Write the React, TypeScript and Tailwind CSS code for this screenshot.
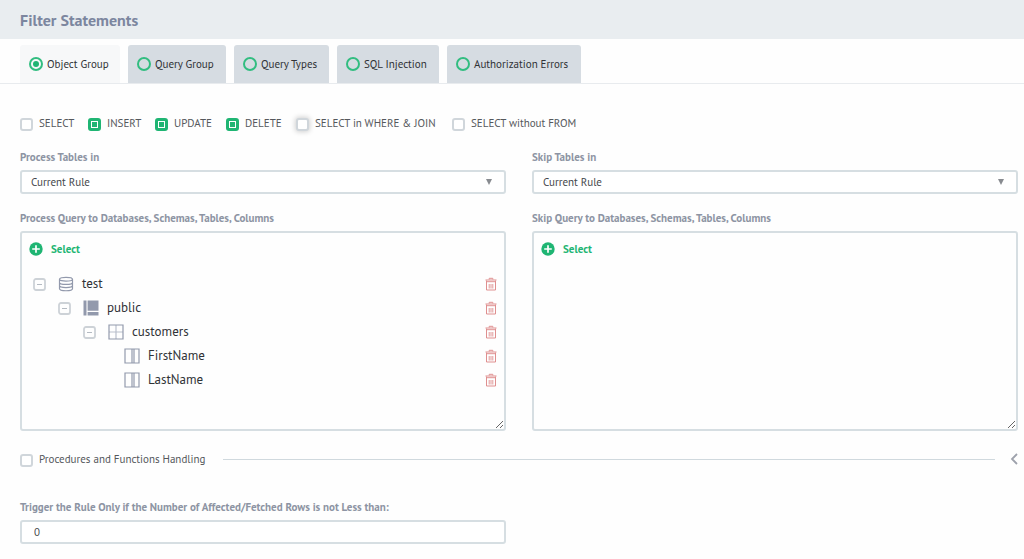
import { useState, type ReactNode } from 'react';

const tabs = [
  { name: 'Object Group', width: 'w-[100px]' },
  { name: 'Query Group', width: 'w-[98px]' },
  { name: 'Query Types', width: 'w-[95px]' },
  { name: 'SQL Injection', width: 'w-[102px]' },
  { name: 'Authorization Errors', width: 'w-[134px]' },
];

const statements = [
  { name: 'SELECT', width: 'w-[56px]', checked: false, glow: false },
  { name: 'INSERT', width: 'w-[55px]', checked: true, glow: false },
  { name: 'UPDATE', width: 'w-[59px]', checked: true, glow: false },
  { name: 'DELETE', width: 'w-[58px]', checked: true, glow: false },
  { name: 'SELECT in WHERE & JOIN', width: 'w-[144px]', checked: false, glow: true },
  { name: 'SELECT without FROM', width: 'w-[140px]', checked: false, glow: false },
];

function Checkbox({ label, checked = false, glow = false, width = '' }: { label: string; checked?: boolean; glow?: boolean; width?: string }) {
  return (
    <label className={`flex items-center gap-1.5 whitespace-nowrap text-[11px] leading-4 text-[#55585c] ${width}`}>
      <input
        type="checkbox"
        defaultChecked={checked}
        className={`mt-0.5 grid size-[13px] shrink-0 appearance-none place-content-center rounded-[3px] border-2 border-[#d0d6db] bg-white before:size-[5px] before:bg-[#1fb573] before:opacity-0 checked:border-[3px] checked:border-[#1fb573] checked:before:opacity-100 ${glow ? 'shadow-[0_0_5px_1px_rgba(0,0,0,0.18)]' : ''}`}
      />
      <span>{label}</span>
    </label>
  );
}

function RuleSelect({ id, label }: { id: string; label: string }) {
  return (
    <div>
      <label htmlFor={id} className="block text-[11px] leading-4 font-bold text-[#8d94a3]">{label}</label>
      <div className="mt-[5px] grid items-center">
        <select id={id} className="col-start-1 row-start-1 h-6 w-full appearance-none rounded-[3px] border-2 border-[#d6dee2] bg-white pl-[9px] text-[11px] text-[#44474b]">
          <option>Current Rule</option>
        </select>
        <svg viewBox="0 0 6 6" className="pointer-events-none col-start-1 row-start-1 mr-3.5 size-1.5 justify-self-end" aria-hidden="true">
          <path d="M0 0H6L3 6Z" fill="#888b90" />
        </svg>
      </div>
    </div>
  );
}

function ObjectPanel({ label, children }: { label: string; children?: ReactNode }) {
  return (
    <section>
      <h2 className="text-[11px] leading-4 font-bold text-[#8d94a3]">{label}</h2>
      <div className="mt-[5px] h-50 resize-y overflow-auto rounded-[3px] border-2 border-[#d6dee2] px-[7px] pt-2">
        <button type="button" className="flex h-4 items-center gap-2 text-[11px] font-bold text-[#1fb573]">
          <svg viewBox="0 0 14 14" className="size-3.5" aria-hidden="true">
            <circle cx="7" cy="7" r="6.7" fill="#1fb573" />
            <path d="M7 3.2v7.6M3.2 7h7.6" stroke="#fff" strokeWidth="1.7" />
          </svg>
          Select
        </button>
        {children}
      </div>
    </section>
  );
}

type Kind = 'database' | 'schema' | 'table' | 'column';

function KindIcon({ kind }: { kind: Kind }) {
  return (
    <svg viewBox="0 0 16 16" className="size-4 shrink-0" fill="none" stroke="#9299ac" strokeWidth="1.2" aria-hidden="true">
      {kind === 'database' && (
        <path d="M1.5 3.2C1.5 .7 14.5 .7 14.5 3.2S1.5 5.7 1.5 3.2V12.8C1.5 15.4 14.5 15.4 14.5 12.8V3.2M1.5 6.4C1.5 9 14.5 9 14.5 6.4M1.5 9.6C1.5 12.2 14.5 12.2 14.5 9.6" />
      )}
      {kind === 'schema' && <path d="M.5 .5H3.5V15.5H.5ZM4.6 .5H15.5V10.8H4.6ZM4.6 12H15.5V15.5H4.6Z" fill="#9299ac" stroke="none" />}
      {kind === 'table' && (
        <>
          <path d="M8 1V15M1 8H15" stroke="#b9bfcb" />
          <path d="M1 1H15V15H1Z" />
        </>
      )}
      {kind === 'column' && <path d="M1 1H15V15H1ZM8 1V15M10 1V15" />}
    </svg>
  );
}

const nodes: { name: string; kind: Kind; indent: string }[] = [
  { name: 'test', kind: 'database', indent: 'pl-1' },
  { name: 'public', kind: 'schema', indent: 'pl-[29px]' },
  { name: 'customers', kind: 'table', indent: 'pl-[54px]' },
  { name: 'FirstName', kind: 'column', indent: 'pl-[95px]' },
  { name: 'LastName', kind: 'column', indent: 'pl-[95px]' },
];

function TreeRow({ name, kind, indent }: { name: string; kind: Kind; indent: string }) {
  return (
    <li className={`flex h-6 items-center ${indent}`}>
      {kind !== 'column' && (
        <button type="button" aria-label={`Collapse ${name}`} className="mr-3">
          <svg viewBox="0 0 13 13" className="size-[13px]" fill="none" stroke="#cdd2d7" aria-hidden="true">
            <rect x="1" y="1" width="11" height="11" rx="2" strokeWidth="1.8" />
            <path d="M4 6.5H9" stroke="#b4bac2" strokeWidth="1.2" />
          </svg>
        </button>
      )}
      <KindIcon kind={kind} />
      <span className="ml-2 text-[13px] text-[#303236]">{name}</span>
      <button type="button" aria-label={`Delete ${name}`} className="ml-auto">
        <svg viewBox="0 0 12 14" className="h-3.5 w-3" fill="none" stroke="#df8f8f" aria-hidden="true">
          <path d="M.5 3H11.5M4.2 2.5V1.3H7.8V2.5M1.5 3.5V13H10.5V3.5M2 4.7H10" />
          <path d="M4.2 7V11.5M6 7V11.5M7.8 7V11.5" strokeWidth=".9" />
        </svg>
      </button>
    </li>
  );
}

export default function App() {
  const [active, setActive] = useState(tabs[0].name);
  return (
    <div className="min-h-screen bg-[#fefefe] font-['PT_Sans','Noto_Sans',sans-serif]">
      <header className="flex h-[39px] items-center bg-[#e9edf0] px-5">
        <h1 className="text-base font-bold text-[#7c869f]">Filter Statements</h1>
      </header>
      <div className="flex gap-2 border-b border-[#e8ebee] px-5 pt-1.5">
        {tabs.map(({ name, width }) => (
          <label key={name} className={`flex h-[38px] items-center gap-1 rounded-t-[3px] pl-[9px] text-[11px] whitespace-nowrap text-[#303236] ${width} ${active === name ? 'bg-[#f7f8f9]' : 'bg-[#d6dce2]'}`}>
            <input
              type="radio"
              name="section"
              checked={active === name}
              onChange={() => setActive(name)}
              className="grid size-3.5 shrink-0 appearance-none place-content-center rounded-full border-2 border-[#32bd80] before:size-1.5 before:rounded-full before:bg-[#1fb573] before:opacity-0 checked:before:opacity-100"
            />
            {name}
          </label>
        ))}
      </div>
      <main className="pt-[31px] pr-1.5 pl-5">
        <div className="flex gap-3">
          {statements.map(({ name, width, checked, glow }) => (
            <Checkbox key={name} label={name} width={width} checked={checked} glow={glow} />
          ))}
        </div>
        <div className="mt-[18px] grid grid-cols-2 gap-x-[26px] gap-y-4">
          <RuleSelect id="process-tables" label="Process Tables in" />
          <RuleSelect id="skip-tables" label="Skip Tables in" />
          <ObjectPanel label="Process Query to Databases, Schemas, Tables, Columns">
            <ul className="mt-[15px]">
              {nodes.map((node) => (
                <TreeRow key={node.name} {...node} />
              ))}
            </ul>
          </ObjectPanel>
          <ObjectPanel label="Skip Query to Databases, Schemas, Tables, Columns" />
        </div>
        <div className="mt-5 flex items-center">
          <Checkbox label="Procedures and Functions Handling" />
          <hr className="mr-[15px] ml-[18px] flex-1 border-[#d0d9de]" />
          <button type="button" aria-label="Expand procedures and functions handling">
            <svg viewBox="0 0 8 12" className="h-3 w-2" fill="none" stroke="#9ea2ac" strokeWidth="1.8" aria-hidden="true">
              <path d="M7 1L2 6L7 11" />
            </svg>
          </button>
        </div>
        <div className="mt-8 grid grid-cols-2 gap-x-[26px]">
          <div>
            <label htmlFor="row-threshold" className="block text-[11px] leading-4 font-bold text-[#8d94a3]">
              Trigger the Rule Only if the Number of Affected/Fetched Rows is not Less than:
            </label>
            <input id="row-threshold" type="text" defaultValue="0" className="mt-[5px] block h-6 w-full rounded-[3px] border-2 border-[#d6dee2] bg-white pl-3 text-[11px] text-[#44474b]" />
          </div>
        </div>
      </main>
    </div>
  );
}
